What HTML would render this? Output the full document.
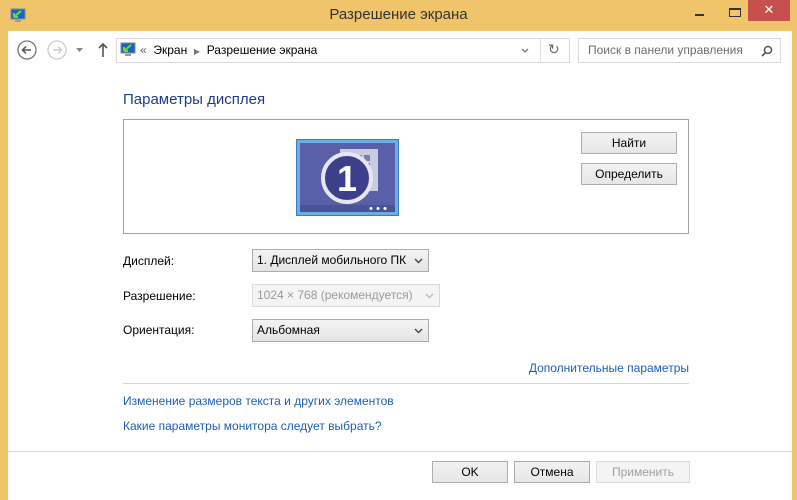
<!DOCTYPE html>
<html><head><meta charset="utf-8"><style>
*{box-sizing:border-box;margin:0;padding:0}
body{width:797px;height:500px;overflow:hidden;background:#efc46a;font-family:"Liberation Sans","DejaVu Sans",sans-serif;font-size:12px;color:#000;position:relative}
.abs{position:absolute}
.client{position:absolute;left:8px;top:31px;width:784px;height:469px;background:#fff}
.title{left:0;top:6px;width:797px;text-align:center;font-size:15px;color:#333}
.btn{position:absolute;height:22px;border:1px solid #adadad;background:linear-gradient(#f2f2f2,#e6e6e6);text-align:center;line-height:20px;font-size:12px}
.sel{position:absolute;height:23px;border:1px solid #acacac;background:linear-gradient(#f3f3f3,#e5e5e5);padding-left:4px;line-height:21px;font-size:12px}
.sel svg{position:absolute;right:5px;top:8px}
.link{position:absolute;color:#1e5fb5;font-size:12px}
.lbl{position:absolute;font-size:12px}
</style></head><body>
<svg class="abs" style="left:10px;top:8px" width="16" height="15"><rect x="1" y="1" width="14" height="10" fill="#1a64c8" stroke="#888"/><path d="M4 9 L11 3 M4 9 h4 M4 9 v-4" stroke="#6cdc30" stroke-width="2" fill="none"/><rect x="5" y="12" width="6" height="2" fill="#999"/></svg>
<div class="abs title">Разрешение экрана</div>
<div class="abs" style="left:695px;top:14px;width:9px;height:2px;background:#333"></div>
<div class="abs" style="left:729px;top:8px;width:12px;height:9px;border:1px solid #333;border-top-width:2px"></div>
<div class="abs" style="left:748px;top:0;width:42px;height:21px;background:#c7504f;color:#fff;text-align:center;font-size:13px;line-height:20px">✕</div>
<div class="client"></div>
<svg class="abs" style="left:16px;top:40px" width="100" height="22">
<circle cx="11" cy="10" r="9" fill="#fff" stroke="#777" stroke-width="1.3"/><path d="M15 10H7M10 6.5L6.5 10 10 13.5" stroke="#555" stroke-width="1.5" fill="none"/>
<circle cx="41" cy="10" r="9" fill="#fff" stroke="#ccc" stroke-width="1.3"/><path d="M37 10H45M42 6.5L45.5 10 42 13.5" stroke="#ccc" stroke-width="1.5" fill="none"/>
<path d="M60 8h7l-3.5 4z" fill="#888"/>
<path d="M87 17V4M83 8l4-4 4 4" stroke="#555" stroke-width="1.6" fill="none"/>
</svg>
<div class="abs" style="left:116px;top:38px;width:454px;height:25px;border:1px solid #d9d9d9"></div>
<svg class="abs" style="left:120px;top:42px" width="16" height="16"><rect x="1" y="1" width="14" height="10" fill="#1a64c8" stroke="#888"/><path d="M4 9 L11 3 M4 9 h4 M4 9 v-4" stroke="#6cdc30" stroke-width="2" fill="none"/><rect x="5" y="12" width="6" height="2" fill="#999"/></svg>
<div class="abs" style="left:140px;top:43px;font-size:12px"><span style="color:#666">«</span>&nbsp; Экран &nbsp;<span style="color:#777;font-size:8px">▶</span>&nbsp; Разрешение экрана</div>
<svg class="abs" style="left:521px;top:48px" width="8" height="6"><path d="M1 1l3 3 3-3" stroke="#777" fill="none" stroke-width="1.3"/></svg>
<div class="abs" style="left:540px;top:38px;width:1px;height:25px;background:#e0e0e0"></div>
<div class="abs" style="left:548px;top:41px;color:#666;font-size:14px">↻</div>
<div class="abs" style="left:578px;top:38px;width:203px;height:25px;border:1px solid #d9d9d9;color:#6d6d6d;padding:4px 0 0 9px;font-size:12px">Поиск в панели управления</div>
<svg class="abs" style="left:760px;top:44px" width="14" height="14"><circle cx="8" cy="6" r="3.5" fill="none" stroke="#555" stroke-width="1.5"/><path d="M5.5 8.5L2 12" stroke="#555" stroke-width="1.8"/></svg>

<div class="abs" style="left:123px;top:91px;font-size:15px;color:#1e3a8a">Параметры дисплея</div>
<div class="abs" style="left:123px;top:119px;width:566px;height:115px;border:1px solid #a0a0a0"></div>
<svg class="abs" style="left:296px;top:139px" width="103" height="77">
<rect x="0.5" y="0.5" width="102" height="76" fill="#6aaee6" stroke="#3b7dc4"/>
<rect x="4" y="4" width="95" height="62" fill="#5a60a8"/>
<rect x="4" y="66" width="95" height="7" fill="#4a5298"/>
<circle cx="75" cy="69.5" r="1.5" fill="#fff"/><circle cx="82" cy="69.5" r="1.5" fill="#fff"/><circle cx="89" cy="69.5" r="1.5" fill="#fff"/>
<rect x="44" y="10" width="38" height="42" fill="#c8cbe2"/>
<g fill="#7b7fb0"><rect x="60" y="16" width="6" height="6"/><rect x="68" y="16" width="6" height="6"/><rect x="60" y="24" width="6" height="6"/><rect x="68" y="24" width="6" height="6"/><rect x="60" y="32" width="6" height="6"/><rect x="68" y="32" width="6" height="6"/></g>
<circle cx="51" cy="39" r="24" fill="#3c3f8c" stroke="#e6e6f2" stroke-width="4"/>
<text x="51" y="52" text-anchor="middle" font-family="Liberation Sans" font-weight="bold" font-size="36" fill="#fff">1</text>
</svg>
<div class="btn" style="left:581px;top:132px;width:96px">Найти</div>
<div class="btn" style="left:581px;top:163px;width:96px">Определить</div>

<div class="lbl" style="left:123px;top:254px">Дисплей:</div>
<div class="lbl" style="left:123px;top:289px">Разрешение:</div>
<div class="lbl" style="left:123px;top:323px">Ориентация:</div>
<div class="sel" style="left:252px;top:249px;width:177px">1. Дисплей мобильного ПК<svg width="9" height="6"><path d="M1 1l3.5 3.5L8 1" stroke="#444" fill="none" stroke-width="1.4"/></svg></div>
<div class="sel" style="left:252px;top:284px;width:188px;border-color:#d9d9d9;background:#f4f4f4;color:#9a9a9a">1024 × 768 (рекомендуется)<svg width="9" height="6"><path d="M1 1l3.5 3.5L8 1" stroke="#bbb" fill="none" stroke-width="1.4"/></svg></div>
<div class="sel" style="left:252px;top:319px;width:177px">Альбомная<svg width="9" height="6"><path d="M1 1l3.5 3.5L8 1" stroke="#444" fill="none" stroke-width="1.4"/></svg></div>

<div class="link" style="right:108px;top:361px">Дополнительные параметры</div>
<div class="abs" style="left:123px;top:383px;width:566px;height:1px;background:#d6d6d6"></div>
<div class="link" style="left:123px;top:394px">Изменение размеров текста и других элементов</div>
<div class="link" style="left:123px;top:419px">Какие параметры монитора следует выбрать?</div>
<div class="abs" style="left:8px;top:451px;width:784px;height:1px;background:#dcdcdc"></div>
<div class="btn" style="left:432px;top:461px;width:76px">OK</div>
<div class="btn" style="left:514px;top:461px;width:76px">Отмена</div>
<div class="btn" style="left:596px;top:461px;width:94px;border-color:#d9d9d9;background:#f4f4f4;color:#a0a0a0">Применить</div>
</body></html>
